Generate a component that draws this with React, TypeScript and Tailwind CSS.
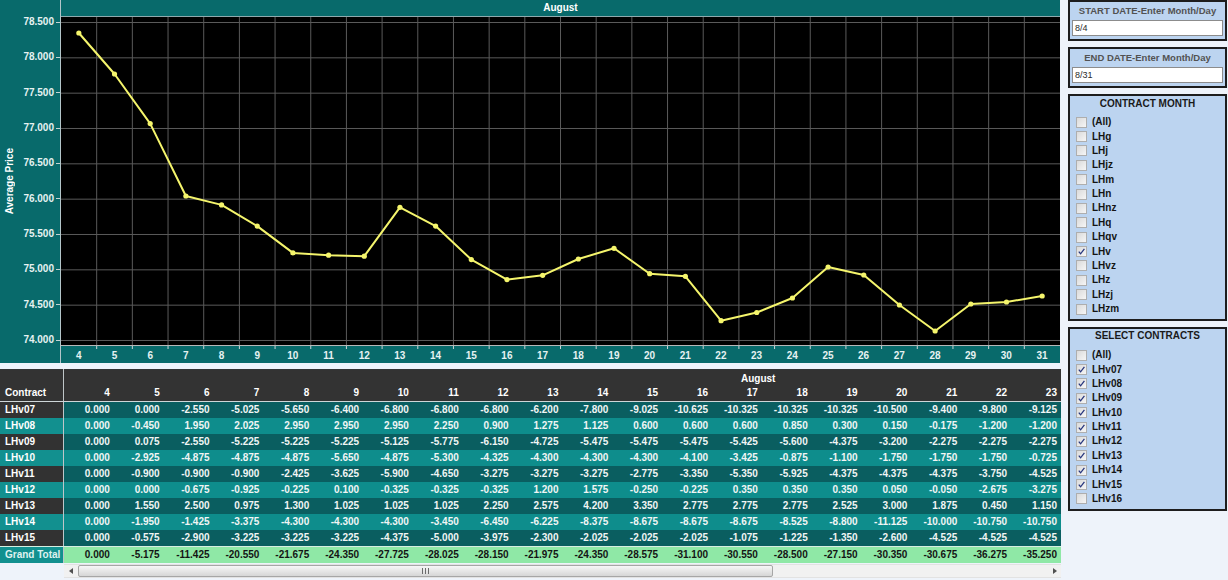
import React from "react";

const days = Array.from({ length: 28 }, (_, i) => i + 4);
const ys = [
  33, 74.0, 123.6, 196.0, 204.9, 226.1, 252.9, 255.2, 256.2, 207.3, 226.1, 259.6, 279.6, 275.3,
  259.0, 248.3, 273.7, 276.3, 320.7, 312.5, 298, 267, 275, 305, 331, 304, 302, 296,
];
const yLabels = ["78.500", "78.000", "77.500", "77.000", "76.500", "76.000", "75.500", "75.000", "74.500", "74.000"];

const PLOT_W = 999;
const PLOT_H = 328;
const CW = PLOT_W / 28;

const tableDays = Array.from({ length: 20 }, (_, i) => i + 4);

const rows: { name: string; vals: string[] }[] = [
  { name: "LHv07", vals: ["0.000", "0.000", "-2.550", "-5.025", "-5.650", "-6.400", "-6.800", "-6.800", "-6.800", "-6.200", "-7.800", "-9.025", "-10.625", "-10.325", "-10.325", "-10.325", "-10.500", "-9.400", "-9.800", "-9.125"] },
  { name: "LHv08", vals: ["0.000", "-0.450", "1.950", "2.025", "2.950", "2.950", "2.950", "2.250", "0.900", "1.275", "1.125", "0.600", "0.600", "0.600", "0.850", "0.300", "0.150", "-0.175", "-1.200", "-1.200"] },
  { name: "LHv09", vals: ["0.000", "0.075", "-2.550", "-5.225", "-5.225", "-5.225", "-5.125", "-5.775", "-6.150", "-4.725", "-5.475", "-5.475", "-5.475", "-5.425", "-5.600", "-4.375", "-3.200", "-2.275", "-2.275", "-2.275"] },
  { name: "LHv10", vals: ["0.000", "-2.925", "-4.875", "-4.875", "-4.875", "-5.650", "-4.875", "-5.300", "-4.325", "-4.300", "-4.300", "-4.300", "-4.100", "-3.425", "-0.875", "-1.100", "-1.750", "-1.750", "-1.750", "-0.725"] },
  { name: "LHv11", vals: ["0.000", "-0.900", "-0.900", "-0.900", "-2.425", "-3.625", "-5.900", "-4.650", "-3.275", "-3.275", "-3.275", "-2.775", "-3.350", "-5.350", "-5.925", "-4.375", "-4.375", "-4.375", "-3.750", "-4.525"] },
  { name: "LHv12", vals: ["0.000", "0.000", "-0.675", "-0.925", "-0.225", "0.100", "-0.325", "-0.325", "-0.325", "1.200", "1.575", "-0.250", "-0.225", "0.350", "0.350", "0.350", "0.050", "-0.050", "-2.675", "-3.275"] },
  { name: "LHv13", vals: ["0.000", "1.550", "2.500", "0.975", "1.300", "1.025", "1.025", "1.025", "2.250", "2.575", "4.200", "3.350", "2.775", "2.775", "2.775", "2.525", "3.000", "1.875", "0.450", "1.150"] },
  { name: "LHv14", vals: ["0.000", "-1.950", "-1.425", "-3.375", "-4.300", "-4.300", "-4.300", "-3.450", "-6.450", "-6.225", "-8.375", "-8.675", "-8.675", "-8.675", "-8.525", "-8.800", "-11.125", "-10.000", "-10.750", "-10.750"] },
  { name: "LHv15", vals: ["0.000", "-0.575", "-2.900", "-3.225", "-3.225", "-3.225", "-4.375", "-5.000", "-3.975", "-2.300", "-2.025", "-2.025", "-2.025", "-1.075", "-1.225", "-1.350", "-2.600", "-4.525", "-4.525", "-4.525"] },
];
const totals = ["0.000", "-5.175", "-11.425", "-20.550", "-21.675", "-24.350", "-27.725", "-28.025", "-28.150", "-21.975", "-24.350", "-28.575", "-31.100", "-30.550", "-28.500", "-27.150", "-30.350", "-30.675", "-36.275", "-35.250"];

const monthItems = ["(All)", "LHg", "LHj", "LHjz", "LHm", "LHn", "LHnz", "LHq", "LHqv", "LHv", "LHvz", "LHz", "LHzj", "LHzm"];
const contractItems = ["(All)", "LHv07", "LHv08", "LHv09", "LHv10", "LHv11", "LHv12", "LHv13", "LHv14", "LHv15", "LHv16"];

function Plot() {
  const pts = ys.map((y, i) => [(i + 0.5) * CW, y - 17] as const);
  return (
    <svg width={PLOT_W} height={PLOT_H} className="block">
      <rect width={PLOT_W} height={PLOT_H} fill="#000" />
      {yLabels.map((_, k) => (
        <line key={"h" + k} x1={0} x2={PLOT_W} y1={5.5 + k * 35.333} y2={5.5 + k * 35.333} stroke="#5a5a5a" strokeWidth={1} />
      ))}
      {Array.from({ length: 27 }, (_, k) => (
        <line key={"v" + k} x1={(k + 1) * CW} x2={(k + 1) * CW} y1={0} y2={PLOT_H} stroke="#5a5a5a" strokeWidth={1} />
      ))}
      <polyline
        points={pts.map((p) => p.join(",")).join(" ")}
        fill="none"
        stroke="#f5f56c"
        strokeWidth={2}
        strokeLinejoin="round"
      />
      {pts.map((p, i) => (
        <circle key={i} cx={p[0]} cy={p[1]} r={2.6} fill="#f5f56c" />
      ))}
    </svg>
  );
}

function Chart() {
  return (
    <div className="flex w-[1060px] h-[363px]">
      <div className="w-[61px] h-full bg-[#086a6b] border-r border-[#b4c6ca] flex">
        <div className="w-[20px] flex items-center justify-center">
          <span className="[writing-mode:vertical-rl] rotate-180 text-[10px] font-bold text-white whitespace-nowrap leading-none">
            Average Price
          </span>
        </div>
        <div className="w-[40px] flex flex-col pt-[4.4px]">
          {yLabels.map((l) => (
            <div key={l} className="h-[35.333px] flex items-center justify-end gap-[2px]">
              <span className="text-[10px] font-bold text-[#e6f2f2] leading-none">{l}</span>
              <span className="w-[4px] h-px bg-[#c4d4d4]" />
            </div>
          ))}
        </div>
      </div>
      <div className="w-[999px] flex flex-col">
        <div className="h-[17px] bg-[#086a6b] border-b border-[#8fa9ad] flex items-center justify-center">
          <span className="text-[10px] font-bold text-white leading-none">August</span>
        </div>
        <Plot />
        <div className="h-[18px] bg-[#086a6b] border-t border-[#b8b8b8] flex flex-col">
          <svg width={PLOT_W} height={3} className="block">
            {Array.from({ length: 27 }, (_, k) => (
              <line key={k} x1={(k + 1) * CW} x2={(k + 1) * CW} y1={0} y2={3} stroke="#c8d6d6" strokeWidth={1} />
            ))}
          </svg>
          <div className="flex flex-1 items-center">
            {days.map((d) => (
              <div key={d} className="flex-1 text-center text-[10px] font-bold text-[#e6f2f2] leading-none">
                {d}
              </div>
            ))}
          </div>
        </div>
      </div>
    </div>
  );
}

function Table() {
  return (
    <div className="w-[1061px] mt-[6px] font-bold text-[10px] leading-none">
      <div className="bg-[#333333] border-b border-[#cfd6d8]">
        <div className="h-[16px] flex">
          <div className="w-[64px] border-r border-[#bfc6c8]" />
          <div className="flex-1 flex items-end pl-[677px] pb-[1px] text-white">August</div>
        </div>
        <div className="h-[16px] grid grid-cols-[64px_repeat(20,minmax(0,1fr))] items-stretch text-white">
          <div className="border-r border-[#bfc6c8] flex items-center pl-[5px]">Contract</div>
          {tableDays.map((d) => (
            <div key={d} className="flex items-center justify-end pr-[4px]">
              {d}
            </div>
          ))}
        </div>
      </div>
      {rows.map((r, i) => {
        const dark = i % 2 === 0;
        return (
          <div
            key={r.name}
            className={
              dark
                ? "h-[16px] grid grid-cols-[64px_repeat(20,minmax(0,1fr))] bg-[#0a5e60] text-[#f1f5f5]"
                : "h-[16px] grid grid-cols-[64px_repeat(20,minmax(0,1fr))] bg-[#0e8d8c] text-[#f1f5f5]"
            }
          >
            <div
              className={
                dark
                  ? "bg-[#323232] border-r border-[#bfc6c8] flex items-center pl-[5px] text-white"
                  : "bg-[#12908f] border-r border-[#bfc6c8] flex items-center pl-[5px] text-white"
              }
            >
              {r.name}
            </div>
            {r.vals.map((v, j) => (
              <div key={j} className="flex items-center justify-end pr-[4px]">
                {v}
              </div>
            ))}
          </div>
        );
      })}
      <div className="h-[17px] grid grid-cols-[64px_repeat(20,minmax(0,1fr))] bg-[#8fe8a6] text-[#141414] border-t border-[#d6efe2]">
        <div className="bg-[#12908f] border-r border-[#bfc6c8] flex items-center pl-[5px] text-[#dff2f0]">Grand Total</div>
        {totals.map((v, j) => (
          <div key={j} className="flex items-center justify-end pr-[4px]">
            {v}
          </div>
        ))}
      </div>
    </div>
  );
}

function Scrollbar() {
  return (
    <div className="ml-[64px] mt-[1px] w-[997px] h-[14px] flex items-center bg-[#f1f1f1] border-y border-[#e2e2e2]">
      <div className="w-[13px] h-full flex items-center justify-center">
        <svg width="4" height="6" viewBox="0 0 4 6">
          <path d="M4 0 L0 3 L4 6 Z" fill="#505050" />
        </svg>
      </div>
      <div className="ml-[1px] w-[695px] h-[12px] rounded-[2px] border border-[#a6a6a6] bg-gradient-to-b from-[#f7f7f7] to-[#d6d6d6] flex items-center justify-center">
        <svg width="7" height="6" viewBox="0 0 7 6">
          <path d="M0.5 0 V6 M3.5 0 V6 M6.5 0 V6" stroke="#6b6b6b" strokeWidth="1" />
        </svg>
      </div>
      <div className="flex-1" />
      <div className="w-[13px] h-full flex items-center justify-center">
        <svg width="4" height="6" viewBox="0 0 4 6">
          <path d="M0 0 L4 3 L0 6 Z" fill="#505050" />
        </svg>
      </div>
    </div>
  );
}

function CheckBox({ checked }: { checked: boolean }) {
  return (
    <div className="w-[11px] h-[11px] border border-[#aeaeae] bg-gradient-to-br from-[#dadada] to-[#f6f6f6] flex items-center justify-center shrink-0">
      {checked && (
        <svg width="9" height="9" viewBox="0 0 9 9">
          <path d="M1.8 4.6 L3.6 6.8 L7.4 1.8" fill="none" stroke="#28377e" strokeWidth="1.3" />
        </svg>
      )}
    </div>
  );
}

function DateBox({ title, value }: { title: string; value: string }) {
  return (
    <div className="h-[41px] border-2 border-[#1d1d1d] bg-[#bcd4f0] flex flex-col px-[2px]">
      <div className="h-[18px] flex items-center justify-center text-[9.5px] font-bold text-[#525252] leading-none">
        {title}
      </div>
      <div className="h-[16px] bg-white border border-[#8c8c8c] flex items-center pl-[2px] text-[9px] text-[#2a2a2a] leading-none">
        {value}
      </div>
    </div>
  );
}

function ListBox({
  title,
  items,
  checked,
  height,
  titleH,
  pad,
}: {
  title: string;
  items: string[];
  checked: (s: string) => boolean;
  height: string;
  titleH: string;
  pad: string;
}) {
  return (
    <div className={height + " border-2 border-[#1d1d1d] bg-[#bcd4f0] flex flex-col"}>
      <div className={titleH + " flex items-center justify-center text-[10px] font-bold text-[#1a1a1a] leading-none"}>
        {title}
      </div>
      <div className={pad + " flex flex-col"}>
        {items.map((it) => (
          <div key={it} className="h-[14.38px] flex items-center pl-[6px] gap-[5px]">
            <CheckBox checked={checked(it)} />
            <span className="text-[10px] font-bold text-[#141414] leading-none">{it}</span>
          </div>
        ))}
      </div>
    </div>
  );
}

export default function App() {
  return (
    <div className="w-[1228px] h-[580px] bg-[#eef3fa] flex overflow-hidden font-['Liberation_Sans',Arial,sans-serif]">
      <div className="w-[1062px] flex flex-col">
        <Chart />
        <Table />
        <Scrollbar />
      </div>
      <div className="ml-[6px] w-[159px] flex flex-col">
        <DateBox title="START DATE-Enter Month/Day" value="8/4" />
        <div className="mt-[6px]">
          <DateBox title="END DATE-Enter Month/Day" value="8/31" />
        </div>
        <div className="mt-[6px]">
          <ListBox
            title="CONTRACT MONTH"
            items={monthItems}
            checked={(s) => s === "LHv"}
            height="h-[227px]"
            titleH="h-[15px]"
            pad="pt-[4px]"
          />
        </div>
        <div className="mt-[6px]">
          <ListBox
            title="SELECT CONTRACTS"
            items={contractItems}
            checked={(s) => s !== "(All)" && s !== "LHv16"}
            height="h-[184px]"
            titleH="h-[14px]"
            pad="pt-[5px]"
          />
        </div>
      </div>
    </div>
  );
}
